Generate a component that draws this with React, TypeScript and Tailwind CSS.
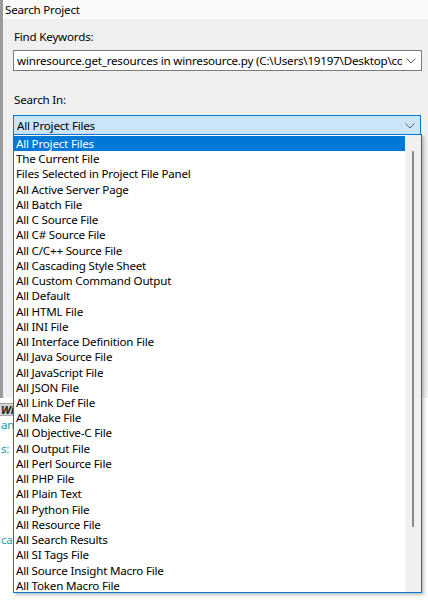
import React from 'react';

const fileTypes = [
  'All Project Files',
  'The Current File',
  'Files Selected in Project File Panel',
  'All Active Server Page',
  'All Batch File',
  'All C Source File',
  'All C# Source File',
  'All C/C++ Source File',
  'All Cascading Style Sheet',
  'All Custom Command Output',
  'All Default',
  'All HTML File',
  'All INI File',
  'All Interface Definition File',
  'All Java Source File',
  'All JavaScript File',
  'All JSON File',
  'All Link Def File',
  'All Make File',
  'All Objective-C File',
  'All Output File',
  'All Perl Source File',
  'All PHP File',
  'All Plain Text',
  'All Python File',
  'All Resource File',
  'All Search Results',
  'All SI Tags File',
  'All Source Insight Macro File',
  'All Token Macro File',
];

function Chevron() {
  return (
    <svg width="10" height="6" viewBox="0 0 10 6" className="shrink-0">
      <path d="M0.5 0.5 L5 5 L9.5 0.5" fill="none" stroke="#606060" strokeWidth="1" />
    </svg>
  );
}

export default function App() {
  return (
    <div className="relative w-[428px] h-[600px] overflow-hidden bg-white text-[11.6px] tracking-[-0.2px] text-black font-['Noto_Sans','Liberation_Sans',sans-serif]">
      {/* Dialog */}
      <div className="h-[398px] bg-[#f0f0f0] border-l-[3px] border-[#9a9a9a] flex flex-col">
        <div className="h-[19px] bg-[#fafafa] pl-[2px] flex items-center leading-none">Search Project</div>
        <div className="pl-[10px] pr-[6px]">
          <div className="mt-[10px] h-[16px] leading-[16px] pl-[1px]">Find Keywords:</div>
          <div className="mt-[5px] h-[21px] bg-white border border-[#7a7a7a] flex items-center pl-[3px] pr-[5px] gap-[4px]">
            <span className="flex-1 overflow-hidden whitespace-nowrap leading-[17px]">
              winresource.get_resources in winresource.py (C:\Users\19197\Desktop\code\winresource)
            </span>
            <Chevron />
          </div>
          <div className="mt-[21px] h-[16px] leading-[16px] pl-[1px]">Search In:</div>
          <div className="mt-[7px] h-[21px] mr-[1px] bg-[#cce4f7] border border-[#0078d7] flex items-center pl-[3px] pr-[5px]">
            <span className="flex-1 leading-[17px]">All Project Files</span>
            <Chevron />
          </div>
        </div>
      </div>

      {/* Background window, only its left edge shows beside the list */}
      <div className="w-[13px] overflow-hidden whitespace-nowrap">
        <div className="h-[13px] mt-[5px] bg-[#d4d4d4] border-y border-[#a8a8a8] pl-[1px] font-bold italic text-[11px] leading-[11px] text-[#222]">Wi</div>
        <div className="mt-[2px] pl-[1px] text-[#1b9aaa] leading-[14px]">and</div>
        <div className="mt-[10px] pl-[1px] text-[#1b9aaa] leading-[14px]">s:</div>
        <div className="mt-[77px] pl-[1px] text-[#1b9aaa] leading-[14px]">ca</div>
      </div>

      {/* Dropdown list */}
      <div className="absolute left-[13px] top-[134px] w-[409px] h-[459px] bg-white border border-[#0078d7] shadow-[2px_2px_3px_rgba(0,0,0,0.25)] flex">
        <ul className="flex-1 pt-[1px]">
          {fileTypes.map((t, i) => (
            <li
              key={t}
              className={
                'h-[15.24px] leading-[15.24px] pl-[2px] whitespace-nowrap ' +
                (i === 0 ? 'bg-[#0078d7] text-white' : '')
              }
            >
              {t}
            </li>
          ))}
        </ul>
        <div className="w-[16px] bg-[#f0f0f0] flex justify-center pt-[16px]">
          <div className="w-[2px] h-[376px] bg-[#888888] rounded-full" />
        </div>
      </div>
    </div>
  );
}
